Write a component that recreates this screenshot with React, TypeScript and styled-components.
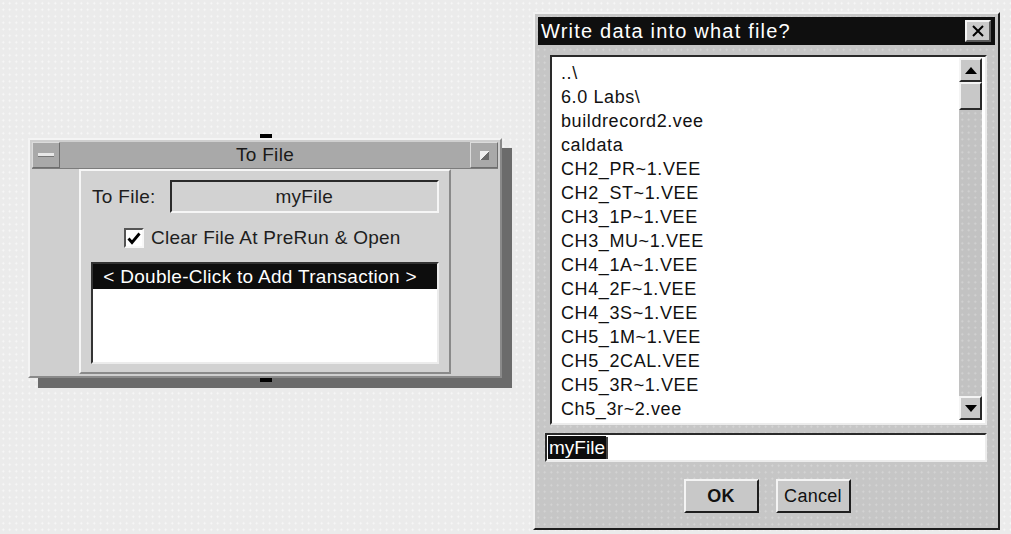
import { createGlobalStyle } from 'styled-components'
import styled from 'styled-components'

const GlobalStyle = createGlobalStyle`
  html, body {
    margin: 0;
    padding: 0;
  }

  body {
    width: 1011px;
    height: 534px;
    overflow: hidden;
    font-family: 'Liberation Sans', Arial, sans-serif;
    color: #111;
  }
`

const files = [
  '..\\',
  '6.0 Labs\\',
  'buildrecord2.vee',
  'caldata',
  'CH2_PR~1.VEE',
  'CH2_ST~1.VEE',
  'CH3_1P~1.VEE',
  'CH3_MU~1.VEE',
  'CH4_1A~1.VEE',
  'CH4_2F~1.VEE',
  'CH4_3S~1.VEE',
  'CH5_1M~1.VEE',
  'CH5_2CAL.VEE',
  'CH5_3R~1.VEE',
  'Ch5_3r~2.vee',
]

const ToFileObject = () => {
  return (
    <Panel>
      <Handle $side="top" />
      <TitleBar>
        <TitleButton>
          <MinimizeGlyph />
        </TitleButton>
        <PanelTitle>To File</PanelTitle>
        <TitleButton>
          <MaximizeGlyph />
        </TitleButton>
      </TitleBar>
      <PanelBody>
        <SidePin />
        <OpenView>
          <FieldRow>
            <Label>To File:</Label>
            <NameField>myFile</NameField>
          </FieldRow>
          <CheckRow>
            <CheckBox>
              <svg width="14" height="13" viewBox="0 0 14 13">
                <path d="M1.5 6.5 L5 10.5 L12.5 1.5" fill="none" stroke="#000" strokeWidth="2.8" />
              </svg>
            </CheckBox>
            <span>Clear File At PreRun &amp; Open</span>
          </CheckRow>
          <TransactionList>
            <TransactionHeader>&lt; Double-Click to Add Transaction &gt;</TransactionHeader>
          </TransactionList>
        </OpenView>
        <SidePin />
      </PanelBody>
      <Handle $side="bottom" />
    </Panel>
  )
}

const FileDialog = () => {
  return (
    <Dialog>
      <DialogTitleBar>
        <DialogTitle>Write data into what file?</DialogTitle>
        <CloseButton>
          <svg width="14" height="14" viewBox="0 0 14 14">
            <path d="M2 2 L12 12 M12 2 L2 12" stroke="#000" strokeWidth="2" />
          </svg>
        </CloseButton>
      </DialogTitleBar>
      <DialogBody>
        <FileList>
          <FileItems>
            {files.map((file) => (
              <FileItem key={file}>{file}</FileItem>
            ))}
          </FileItems>
          <ScrollBar>
            <ArrowButton>
              <svg width="12" height="7" viewBox="0 0 12 7">
                <path d="M0 7 L6 0 L12 7 Z" fill="#000" />
              </svg>
            </ArrowButton>
            <Thumb />
            <Track />
            <ArrowButton>
              <svg width="12" height="7" viewBox="0 0 12 7">
                <path d="M0 0 L6 7 L12 0 Z" fill="#000" />
              </svg>
            </ArrowButton>
          </ScrollBar>
        </FileList>
        <NameInput>
          <Selected>myFile</Selected>
          <Caret />
        </NameInput>
        <ButtonRow>
          <DialogButton $primary>OK</DialogButton>
          <DialogButton>Cancel</DialogButton>
        </ButtonRow>
      </DialogBody>
    </Dialog>
  )
}

export default function App() {
  return (
    <>
      <GlobalStyle />
      <Workspace>
        <ToFileObject />
        <FileDialog />
      </Workspace>
    </>
  )
}

const dots = (color: string, base: string) => `
  background-color: ${base};
  background-image: radial-gradient(circle, ${color} 0.8px, transparent 1.2px);
  background-size: 6.5px 6.5px;
`

const Workspace = styled.div`
  display: flex;
  align-items: flex-start;
  gap: 31px;
  width: 1011px;
  height: 534px;
  box-sizing: border-box;
  padding: 12px 0 0 28px;
  ${dots('#f8f8f8', '#ebebeb')}
`

const Panel = styled.div`
  position: relative;
  display: flex;
  flex-direction: column;
  margin-top: 126px;
  width: 474px;
  height: 240px;
  box-sizing: border-box;
  background: #cfcfcf;
  border: 2px solid;
  border-color: #f4f4f4 #8a8a8a #8a8a8a #f4f4f4;
  box-shadow: 10px 10px 0 #6b6b6b;
`

const Handle = styled.div<{ $side: 'top' | 'bottom' }>`
  position: absolute;
  left: 230px;
  ${({ $side }) => ($side === 'top' ? 'top: -6px;' : 'bottom: -6px;')}
  width: 12px;
  height: 4px;
  background: #000;
`

const TitleBar = styled.div`
  display: flex;
  align-items: stretch;
  height: 26px;
  margin: 2px 2px 0;
  background: #a9a9a9;
  border-bottom: 1px solid #7c7c7c;
`

const TitleButton = styled.div`
  display: flex;
  align-items: center;
  justify-content: center;
  width: 28px;
  box-sizing: border-box;
  border: 1px solid;
  border-color: #dcdcdc #6e6e6e #6e6e6e #dcdcdc;
`

const MinimizeGlyph = styled.div`
  width: 16px;
  height: 3px;
  background: #e8e8e8;
  border-bottom: 1px solid #777;
`

const MaximizeGlyph = styled.div`
  width: 9px;
  height: 9px;
  background: linear-gradient(135deg, #f0f0f0 50%, #6a6a6a 50%);
`

const PanelTitle = styled.div`
  flex: 1;
  display: flex;
  align-items: center;
  justify-content: center;
  font-size: 19px;
  letter-spacing: 0.3px;
  color: #1a1a1a;
`

const PanelBody = styled.div`
  flex: 1;
  display: flex;
  padding-bottom: 2px;
`

const SidePin = styled.div`
  flex: 1;
`

const OpenView = styled.div`
  display: flex;
  flex-direction: column;
  width: 372px;
  box-sizing: border-box;
  padding: 9px 10px 8px 10px;
  border: 2px solid;
  border-color: #f6f6f6 #8a8a8a #8a8a8a #f6f6f6;
  background: #d2d2d2;
`

const FieldRow = styled.div`
  display: flex;
  align-items: center;
  gap: 14px;
  padding-left: 1px;
`

const Label = styled.div`
  font-size: 19px;
  letter-spacing: 0.3px;
  color: #1e1e1e;
`

const NameField = styled.div`
  flex: 1;
  height: 33px;
  box-sizing: border-box;
  display: flex;
  align-items: center;
  justify-content: center;
  font-size: 19px;
  letter-spacing: 0.3px;
  color: #1e1e1e;
  background: #d2d2d2;
  border: 2px solid;
  border-color: #2a2a2a #f6f6f6 #f6f6f6 #2a2a2a;
`

const CheckRow = styled.div`
  display: flex;
  align-items: center;
  gap: 7px;
  margin: 14px 0 13px 33px;
  font-size: 19px;
  letter-spacing: 0.25px;
  color: #1e1e1e;
`

const CheckBox = styled.div`
  width: 20px;
  height: 20px;
  box-sizing: border-box;
  display: flex;
  align-items: center;
  justify-content: center;
  background: #fff;
  border: 2px solid;
  border-color: #555 #f8f8f8 #f8f8f8 #555;
`

const TransactionList = styled.div`
  flex: 1;
  box-sizing: border-box;
  background: #fff;
  border: 2px solid;
  border-color: #333 #ececec #ececec #333;
`

const TransactionHeader = styled.div`
  height: 25px;
  display: flex;
  align-items: center;
  justify-content: center;
  padding-right: 10px;
  background: #0d0d0d;
  color: #fff;
  font-size: 19px;
  letter-spacing: 0.3px;
`

const Dialog = styled.div`
  display: flex;
  flex-direction: column;
  width: 467px;
  height: 518px;
  box-sizing: border-box;
  padding: 3px;
  border: 2px solid;
  border-color: #f2f2f2 #1e1e1e #1e1e1e #f2f2f2;
  ${dots('#d6d6d6', '#c6c6c6')}
`

const DialogTitleBar = styled.div`
  display: flex;
  align-items: center;
  justify-content: space-between;
  height: 28px;
  padding: 0 4px 0 3px;
  background: #0f0f0f;
`

const DialogTitle = styled.div`
  color: #fff;
  font-size: 20px;
  letter-spacing: 1.2px;
`

const CloseButton = styled.div`
  display: flex;
  align-items: center;
  justify-content: center;
  width: 26px;
  height: 22px;
  box-sizing: border-box;
  background: #cacaca;
  border: 2px solid;
  border-color: #f4f4f4 #5a5a5a #5a5a5a #f4f4f4;
`

const DialogBody = styled.div`
  flex: 1;
  display: flex;
  flex-direction: column;
  padding: 10px 6px 0 7px;
`

const FileList = styled.div`
  display: flex;
  height: 370px;
  margin: 0 2px 0 5px;
  box-sizing: border-box;
  background: #fff;
  border: 2px solid;
  border-color: #2a2a2a #ececec #ececec #2a2a2a;
`

const FileItems = styled.div`
  flex: 1;
  padding: 4px 0 0 9px;
`

const FileItem = styled.div`
  height: 24px;
  line-height: 24px;
  font-size: 18px;
  letter-spacing: 0.6px;
  color: #111;
  white-space: nowrap;
`

const ScrollBar = styled.div`
  display: flex;
  flex-direction: column;
  width: 23px;
  margin: 1px 3px 3px 0;
  ${dots('#d4d4d4', '#c2c2c2')}
`

const ArrowButton = styled.div`
  display: flex;
  align-items: center;
  justify-content: center;
  height: 24px;
  box-sizing: border-box;
  background: #c8c8c8;
  border: 2px solid;
  border-color: #f4f4f4 #2a2a2a #2a2a2a #f4f4f4;
`

const Thumb = styled.div`
  height: 28px;
  box-sizing: border-box;
  background: #c8c8c8;
  border: 2px solid;
  border-color: #f4f4f4 #2a2a2a #2a2a2a #f4f4f4;
`

const Track = styled.div`
  flex: 1;
`

const NameInput = styled.div`
  display: flex;
  align-items: center;
  height: 29px;
  margin-top: 8px;
  margin-right: 2px;
  padding-left: 1px;
  box-sizing: border-box;
  background: #fff;
  border: 2px solid;
  border-color: #2a2a2a #ececec #ececec #2a2a2a;
`

const Selected = styled.span`
  background: #0d0d0d;
  color: #fff;
  font-size: 19px;
  line-height: 23px;
  padding: 0 1px;
`

const Caret = styled.span`
  width: 2px;
  height: 22px;
  background: #444;
`

const ButtonRow = styled.div`
  display: flex;
  justify-content: center;
  gap: 17px;
  margin-top: 17px;
`

const DialogButton = styled.div<{ $primary?: boolean }>`
  display: flex;
  align-items: center;
  justify-content: center;
  width: 75px;
  height: 34px;
  box-sizing: border-box;
  font-size: 18px;
  letter-spacing: 0.3px;
  font-weight: ${({ $primary }) => ($primary ? 700 : 400)};
  color: #111;
  background: #c8c8c8;
  border: 2px solid;
  border-color: #f4f4f4 #1e1e1e #1e1e1e #f4f4f4;
`
